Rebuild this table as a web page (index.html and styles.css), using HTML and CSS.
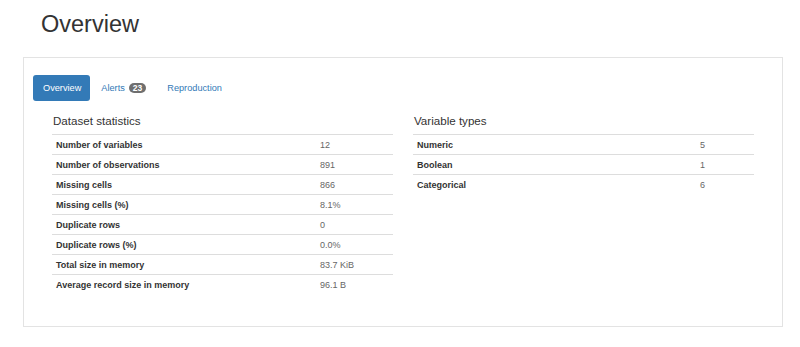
FILE: index.html
```html
<!DOCTYPE html>
<html>
<head>
<meta charset="utf-8">
<link rel="stylesheet" href="styles.css">
</head>
<body>
<h1 class="page-title">Overview</h1>
<div class="panel">
  <ul class="tabs">
    <li><a class="tab active">Overview</a></li>
    <li><a class="tab tab-alerts">Alerts <span class="badge">23</span></a></li>
    <li><a class="tab tab-repro">Reproduction</a></li>
  </ul>
  <div class="cols">
    <div class="col">
      <p class="col-title">Dataset statistics</p>
      <table class="stats stats-left">
        <tr><th>Number of variables</th><td>12</td></tr>
        <tr><th>Number of observations</th><td>891</td></tr>
        <tr><th>Missing cells</th><td>866</td></tr>
        <tr><th>Missing cells (%)</th><td>8.1%</td></tr>
        <tr><th>Duplicate rows</th><td>0</td></tr>
        <tr><th>Duplicate rows (%)</th><td>0.0%</td></tr>
        <tr><th>Total size in memory</th><td>83.7 KiB</td></tr>
        <tr><th>Average record size in memory</th><td>96.1 B</td></tr>
      </table>
    </div>
    <div class="col">
      <p class="col-title">Variable types</p>
      <table class="stats stats-right">
        <tr><th>Numeric</th><td>5</td></tr>
        <tr><th>Boolean</th><td>1</td></tr>
        <tr><th>Categorical</th><td>6</td></tr>
      </table>
    </div>
  </div>
</div>
</body>
</html>
```
FILE: styles.css
```css
html, body {
  margin: 0;
  padding: 0;
  background: #fff;
  font-family: "Liberation Sans", Arial, Helvetica, sans-serif;
  color: #333;
}
.page-title {
  margin: 0;
  padding: 10px 0 0 41px;
  height: 47px;
  font-size: 23.5px;
  font-weight: normal;
  line-height: 28px;
  color: #333;
}
.panel {
  margin-left: 23px;
  width: 758px;
  height: 268px;
  border: 1px solid #e3e3e3;
  padding: 0;
}
.tabs {
  list-style: none;
  margin: 17px 0 0 9px;
  padding: 0;
  display: flex;
  gap: 1px;
  height: 26px;
}
.tab {
  display: flex;
  align-items: center;
  height: 26px;
  padding: 0 9px 0 10px;
  border-radius: 3px;
  color: #337ab7;
  font-size: 9.2px;
}
.tab.active {
  background: #337ab7;
  color: #fff;
}
.tab-alerts { padding: 0 10px 0 10px; }
.tab-repro { padding: 0 10px 0 10px; }
.badge {
  display: inline-block;
  margin-left: 4px;
  background: #6f6f6f;
  color: #fff;
  font-weight: bold;
  font-size: 8.5px;
  line-height: 10px;
  height: 10px;
  padding: 0 4px;
  border-radius: 5px;
}
.cols {
  display: flex;
  gap: 20px;
  padding: 0 28px;
}
.col {
  width: 341px;
}
.col-title {
  margin: 13px 0 0 1px;
  height: 20px;
  font-size: 11.6px;
  line-height: 14px;
  color: #333;
}
.stats {
  width: 100%;
  border-collapse: collapse;
  font-size: 9px;
}
.stats th, .stats td {
  border-top: 1px solid #dddddd;
  height: 19px;
  padding: 0 4px;
  text-align: left;
  vertical-align: middle;
}
.stats th {
  font-weight: bold;
  color: #333;
}
.stats td {
  color: #666;
}
.stats-left th { width: 256px; }
.stats-right th { width: 275px; }
```
